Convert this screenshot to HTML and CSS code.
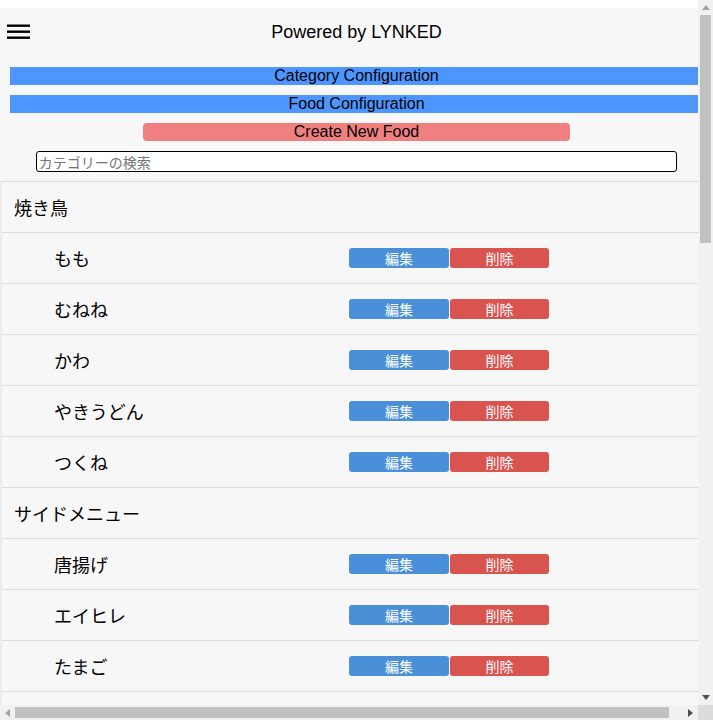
FILE: index.html
```html
<!DOCTYPE html>
<html lang="ja">
<head>
<meta charset="utf-8">
<title>LYNKED</title>
<link rel="stylesheet" href="styles.css">
</head>
<body>
<div class="frame">
<div class="viewport">
<div class="page">
<div class="app">
  <header class="header">
    <button class="menu" aria-label="menu">
      <svg width="24" height="16" viewBox="0 0 24 16"><rect x="0" y="0.5" width="23" height="2.4" fill="#000"/><rect x="0" y="6.5" width="23" height="2.4" fill="#000"/><rect x="0" y="12.5" width="23" height="2.4" fill="#000"/></svg>
    </button>
    <div class="title">Powered by LYNKED</div>
  </header>
  <div class="controls">
    <div class="bar bar-blue">Category Configuration</div>
    <div class="bar bar-blue">Food Configuration</div>
    <div class="bar bar-create">Create New Food</div>
    <input class="search" type="text" placeholder="カテゴリーの検索">
  </div>
  <ul class="list">
    <li class="row cat">焼き鳥</li>
    <li class="row item"><span class="name">もも</span><span class="btn edit">編集</span><span class="btn del">削除</span></li>
    <li class="row item"><span class="name">むねね</span><span class="btn edit">編集</span><span class="btn del">削除</span></li>
    <li class="row item"><span class="name">かわ</span><span class="btn edit">編集</span><span class="btn del">削除</span></li>
    <li class="row item"><span class="name">やきうどん</span><span class="btn edit">編集</span><span class="btn del">削除</span></li>
    <li class="row item"><span class="name">つくね</span><span class="btn edit">編集</span><span class="btn del">削除</span></li>
    <li class="row cat">サイドメニュー</li>
    <li class="row item"><span class="name">唐揚げ</span><span class="btn edit">編集</span><span class="btn del">削除</span></li>
    <li class="row item"><span class="name">エイヒレ</span><span class="btn edit">編集</span><span class="btn del">削除</span></li>
    <li class="row item"><span class="name">たまご</span><span class="btn edit">編集</span><span class="btn del">削除</span></li>
    <li class="row empty"></li>
  </ul>
</div>
</div>
</div>
<div class="vscroll">
  <div class="arrow">
    <svg width="8" height="5" viewBox="0 0 8 5"><polygon points="0,5 8,5 4,0" fill="#a3a3a3"/></svg>
  </div>
  <div class="vtrack"><div class="vthumb"></div></div>
  <div class="arrow">
    <svg width="8" height="5" viewBox="0 0 8 5"><polygon points="0,0 8,0 4,5" fill="#505050"/></svg>
  </div>
</div>
<div class="hscroll">
  <div class="arrow">
    <svg width="5" height="8" viewBox="0 0 5 8"><polygon points="5,0 5,8 0,4" fill="#a3a3a3"/></svg>
  </div>
  <div class="htrack"><div class="hthumb"></div></div>
  <div class="arrow">
    <svg width="5" height="8" viewBox="0 0 5 8"><polygon points="0,0 0,8 5,4" fill="#505050"/></svg>
  </div>
</div>
<div class="corner"></div>
</div>
</body>
</html>
```
FILE: styles.css
```css
html, body {
  margin: 0;
  background: #fff;
}
body {
  font-family: "Liberation Sans", Arial, "Noto Sans CJK JP", sans-serif;
}
.frame {
  display: grid;
  grid-template-columns: 698px 15px;
  grid-template-rows: 705px 15px;
  width: 713px;
  height: 720px;
  overflow: hidden;
}
.viewport {
  overflow: hidden;
  background: #fff;
}
.vscroll {
  display: flex;
  flex-direction: column;
  background: #f1f1f1;
}
.hscroll {
  display: flex;
  flex-direction: row;
  background: #f1f1f1;
}
.arrow {
  width: 15px;
  height: 15px;
  flex: none;
  display: flex;
  align-items: center;
  justify-content: center;
}
.vtrack {
  flex: 1;
  padding: 0 2px;
}
.vthumb {
  height: 228px;
  background: #c1c1c1;
}
.htrack {
  flex: 1;
  padding: 2px 0;
}
.hthumb {
  width: 654px;
  height: 100%;
  background: #c1c1c1;
}
.corner {
  background: #dcdcdc;
}
.page {
  padding-top: 8px;
  width: 713px;
}
.app {
  width: 713px;
  background: #f7f7f7;
}
.header {
  height: 48px;
  display: flex;
  align-items: center;
  justify-content: center;
  position: relative;
}
.menu {
  position: absolute;
  left: 7px;
  top: 16px;
  padding: 0;
  border: 0;
  background: none;
  width: 24px;
  height: 16px;
  line-height: 0;
}
.title {
  font-size: 18px;
  color: #000;
}
.controls {
  display: flex;
  flex-direction: column;
  align-items: center;
  gap: 10px;
  padding: 11px 0 9px;
}
.bar {
  box-sizing: border-box;
  height: 18px;
  line-height: 18px;
  font-size: 16px;
  text-align: center;
  color: #000;
}
.bar-blue {
  align-self: stretch;
  margin: 0 10px;
  background: #4d96ff;
}
.bar-create {
  width: 60%;
  background: #f08080;
  border-radius: 4px;
}
.search {
  box-sizing: border-box;
  width: 90%;
  height: 21px;
  margin: 0;
  padding: 0 2px;
  border: 1px solid #000;
  border-radius: 3px;
  background: #fff;
  font-family: "Noto Sans CJK JP", sans-serif;
  font-size: 14px;
}
.search::placeholder {
  color: #757575;
}
.list {
  list-style: none;
  margin: 0;
  padding: 0;
  border-top: 1px solid #ddd;
  border-left: 2px solid #ececec;
  font-family: "Noto Sans CJK JP", sans-serif;
}
.row {
  height: 50px;
  border-bottom: 1px solid #ddd;
  display: flex;
  align-items: center;
  font-size: 18px;
  color: #000;
}
.cat {
  padding-left: 12px;
}
.item {
  padding-left: 52px;
}
.name {
  width: 295px;
}
.btn {
  width: 100px;
  height: 20px;
  line-height: 20px;
  text-align: center;
  font-size: 14px;
  color: #fff;
  border-radius: 3px;
}
.edit {
  background: #4a90d9;
}
.del {
  margin-left: 1px;
  width: 99px;
  background: #d9534f;
}
```
